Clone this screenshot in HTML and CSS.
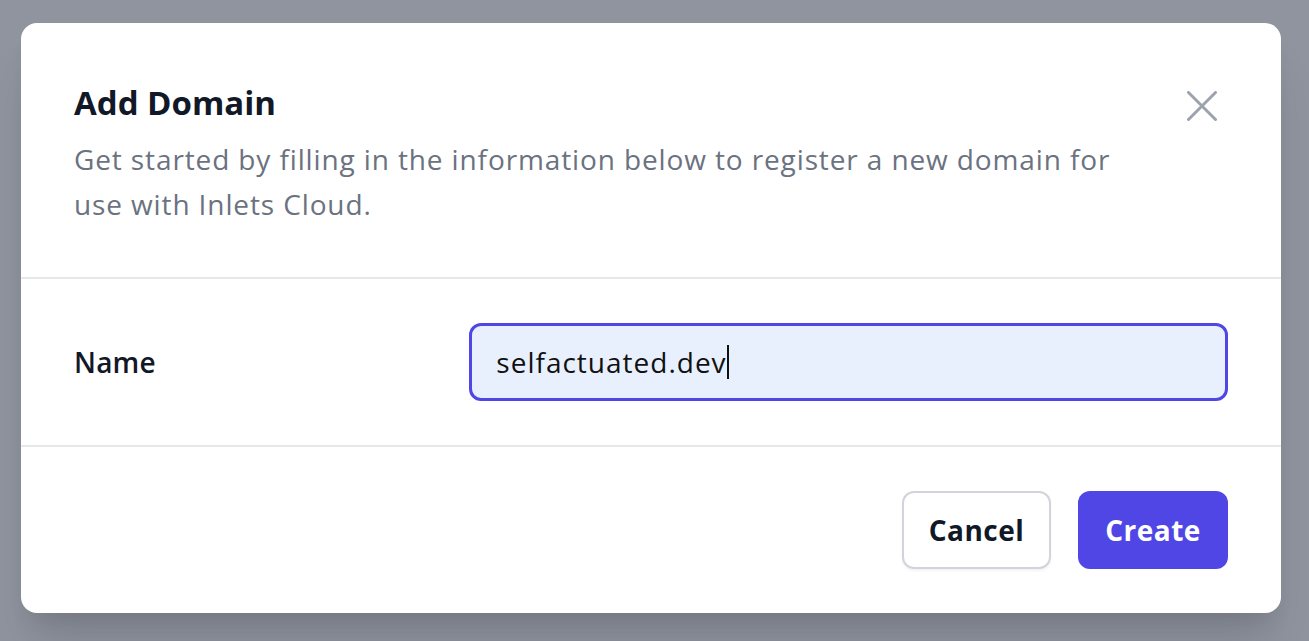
FILE: index.html
```html
<!DOCTYPE html>
<html lang="en">
<head>
<meta charset="utf-8">
<title>Add Domain</title>
<link rel="stylesheet" href="styles.css">
</head>
<body>
<div class="overlay">
  <div class="modal">
    <div class="modal-header">
      <div class="header-text">
        <h2 class="title">Add Domain</h2>
        <p class="desc">Get started by filling in the information below to register a new domain for use with Inlets Cloud.</p>
      </div>
      <button class="close" aria-label="Close">
        <svg width="30" height="30" viewBox="0 0 30 30" fill="none" stroke="#9ca3af" stroke-width="3" stroke-linecap="round"><path d="M1.5 1.5L28.5 28.5M28.5 1.5L1.5 28.5"/></svg>
      </button>
    </div>
    <div class="modal-body">
      <label class="label">Name</label>
      <div class="field"><span class="value">selfactuated.dev</span><span class="caret"></span></div>
    </div>
    <div class="modal-footer">
      <button class="btn btn-cancel">Cancel</button>
      <button class="btn btn-create">Create</button>
    </div>
  </div>
</div>
</body>
</html>
```

FILE: styles.css
```css
* { box-sizing: border-box; }
html, body { margin: 0; padding: 0; }
body {
  font-family: "Open Sans", "Noto Sans", sans-serif;
  background: #8f949f;
  width: 1309px;
  height: 641px;
  overflow: hidden;
}
.overlay {
  padding: 23px 28px 0 21px;
}
.modal {
  width: 1260px;
  height: 590px;
  background: #fff;
  border-radius: 16px;
  box-shadow: 0 40px 50px -10px rgba(0,0,0,0.12), 0 16px 20px -8px rgba(0,0,0,0.08);
  display: flex;
  flex-direction: column;
}
.modal-header {
  display: flex;
  justify-content: space-between;
  align-items: flex-start;
  padding: 52px 53px 50px 53px;
  border-bottom: 2px solid #e5e7eb;
}
.header-text { width: 1050px; }
.title {
  margin: 0;
  font-size: 33px;
  line-height: 56px;
  font-weight: 700;
  color: #111827;
}
.desc {
  margin: 6px 0 0 0;
  font-size: 28px;
  letter-spacing: 0.88px;
  line-height: 45px;
  color: #6b7280;
}
.close {
  background: none;
  border: 0;
  padding: 0;
  margin: 16px 11px 0 0;
  width: 30px;
  height: 30px;
  display: block;
}
.close svg { display: block; }
.modal-body {
  display: grid;
  grid-template-columns: 1fr 1fr 1fr;
  column-gap: 32px;
  align-items: center;
  padding: 44px 53px;
  border-bottom: 2px solid #e5e7eb;
}
.label {
  font-size: 28px;
  letter-spacing: 0.2px;
  font-weight: 600;
  color: #111827;
}
.field {
  grid-column: 2 / 4;
  height: 78px;
  border: 3px solid #4f46e5;
  border-radius: 12px;
  background: #e8f0fe;
  display: flex;
  align-items: center;
  padding-left: 24px;
  font-size: 28px;
  letter-spacing: 1px;
  color: #111;
}
.caret {
  display: inline-block;
  width: 2px;
  height: 34px;
  background: #111;
  margin-left: 0;
}
.modal-footer {
  display: flex;
  justify-content: flex-end;
  gap: 27px;
  padding: 44px 53px;
}
.btn {
  height: 78px;
  border-radius: 12px;
  font-family: inherit;
  font-size: 28px;
  letter-spacing: 0.5px;
  font-weight: 700;
  padding: 0;
}
.btn-cancel {
  width: 149px;
  background: #fff;
  border: 2px solid #d1d5db;
  color: #111827;
  box-shadow: 0 2px 3px rgba(0,0,0,0.05);
}
.btn-create {
  width: 150px;
  background: #4f46e5;
  border: 0;
  color: #fff;
}
```
